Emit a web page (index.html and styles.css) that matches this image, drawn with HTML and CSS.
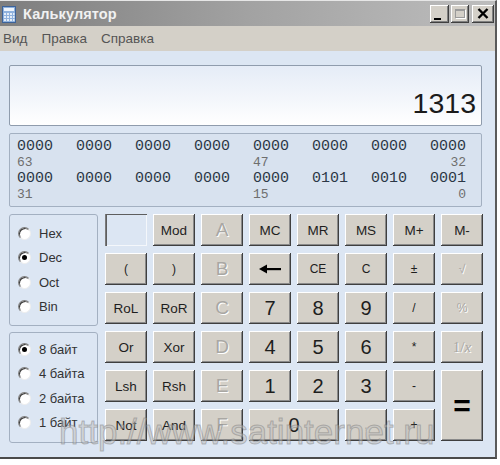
FILE: index.html
```html
<!DOCTYPE html>
<html lang="ru">
<head>
<meta charset="utf-8">
<title>Калькулятор</title>
<link rel="stylesheet" href="styles.css">
</head>
<body>
<div class="window">
  <div class="titlebar">
    <svg class="app-icon" width="14" height="17" viewBox="0 0 14 17">
      <rect x="0.5" y="0.5" width="13" height="16" fill="#8fb2de" stroke="#3d6399"/>
      <rect x="2" y="2" width="10" height="3" fill="#eef4fb"/>
      <g fill="#e4edf8">
        <rect x="2" y="7" width="2" height="2"/><rect x="5" y="7" width="2" height="2"/><rect x="8" y="7" width="2" height="2"/><rect x="11" y="7" width="1.5" height="2"/>
        <rect x="2" y="10" width="2" height="2"/><rect x="5" y="10" width="2" height="2"/><rect x="8" y="10" width="2" height="2"/><rect x="11" y="10" width="1.5" height="2"/>
        <rect x="2" y="13" width="2" height="2"/><rect x="5" y="13" width="2" height="2"/><rect x="8" y="13" width="2" height="2"/><rect x="11" y="13" width="1.5" height="2"/>
      </g>
    </svg>
    <span class="title">Калькулятор</span>
    <div class="caption-buttons">
      <span class="cap-btn cap-min"><span class="min-bar"></span></span>
      <span class="cap-btn cap-max"><span class="max-box"></span></span>
      <span class="cap-btn cap-close">
        <svg width="12" height="11" viewBox="0 0 12 11"><path d="M1.5 1 L10.5 10 M10.5 1 L1.5 10" stroke="#000" stroke-width="2.4"/></svg>
      </span>
    </div>
  </div>
  <div class="menubar">
    <span class="menu-item">Вид</span>
    <span class="menu-item">Правка</span>
    <span class="menu-item">Справка</span>
  </div>
  <div class="main">
    <div class="display"><span class="display-value">1313</span></div>
    <div class="bits">
      <span class="bit">0000</span><span class="bit">0000</span><span class="bit">0000</span><span class="bit">0000</span>
      <span class="bit">0000</span><span class="bit">0000</span><span class="bit">0000</span><span class="bit">0000</span>
      <span class="bit-label">63</span><span class="bit-label"></span><span class="bit-label"></span><span class="bit-label"></span>
      <span class="bit-label">47</span><span class="bit-label"></span><span class="bit-label"></span><span class="bit-label right">32</span>
      <span class="bit">0000</span><span class="bit">0000</span><span class="bit">0000</span><span class="bit">0000</span>
      <span class="bit">0000</span><span class="bit">0101</span><span class="bit">0010</span><span class="bit">0001</span>
      <span class="bit-label">31</span><span class="bit-label"></span><span class="bit-label"></span><span class="bit-label"></span>
      <span class="bit-label">15</span><span class="bit-label"></span><span class="bit-label"></span><span class="bit-label right">0</span>
    </div>
    <div class="lower">
      <div class="side">
        <div class="group group-base">
          <div class="radio-row"><span class="radio"></span><span>Hex</span></div>
          <div class="radio-row"><span class="radio checked"></span><span>Dec</span></div>
          <div class="radio-row"><span class="radio"></span><span>Oct</span></div>
          <div class="radio-row"><span class="radio"></span><span>Bin</span></div>
        </div>
        <div class="group group-size">
          <div class="radio-row"><span class="radio checked"></span><span>8 байт</span></div>
          <div class="radio-row"><span class="radio"></span><span>4 байта</span></div>
          <div class="radio-row"><span class="radio"></span><span>2 байта</span></div>
          <div class="radio-row"><span class="radio"></span><span>1 байт</span></div>
        </div>
      </div>
      <div class="keys">
        <span class="mem-box"></span>
        <span class="btn">Mod</span>
        <span class="btn hex off">A</span>
        <span class="btn">MC</span>
        <span class="btn">MR</span>
        <span class="btn">MS</span>
        <span class="btn">M+</span>
        <span class="btn">M-</span>

        <span class="btn small">(</span>
        <span class="btn small">)</span>
        <span class="btn hex off">B</span>
        <span class="btn"><svg width="22" height="10" viewBox="0 0 22 10"><path d="M0 5 L8 0.5 L8 9.5 Z" fill="#000"/><rect x="6" y="4" width="16" height="2.2" fill="#000"/></svg></span>
        <span class="btn small">CE</span>
        <span class="btn small">C</span>
        <span class="btn small">±</span>
        <span class="btn small off">√</span>

        <span class="btn">RoL</span>
        <span class="btn">RoR</span>
        <span class="btn hex off">C</span>
        <span class="btn digit">7</span>
        <span class="btn digit">8</span>
        <span class="btn digit">9</span>
        <span class="btn small">/</span>
        <span class="btn small off">%</span>

        <span class="btn">Or</span>
        <span class="btn">Xor</span>
        <span class="btn hex off">D</span>
        <span class="btn digit">4</span>
        <span class="btn digit">5</span>
        <span class="btn digit">6</span>
        <span class="btn small">*</span>
        <span class="btn recip off">1/<i>x</i></span>

        <span class="btn">Lsh</span>
        <span class="btn">Rsh</span>
        <span class="btn hex off">E</span>
        <span class="btn digit">1</span>
        <span class="btn digit">2</span>
        <span class="btn digit">3</span>
        <span class="btn small">-</span>
        <span class="btn equals">=</span>

        <span class="btn">Not</span>
        <span class="btn">And</span>
        <span class="btn hex off">F</span>
        <span class="btn digit zero">0</span>
        <span class="btn small off">,</span>
        <span class="btn small">+</span>
      </div>
    </div>
  </div>
  <div class="watermark">http://www.satinternet.ru</div>
</div>
</body>
</html>
```
FILE: styles.css
```css
* { box-sizing: border-box; }
html, body { margin: 0; padding: 0; }
body {
  background: #ffffff;
  font-family: "Liberation Sans", Arial, sans-serif;
  width: 500px;
  height: 465px;
  overflow: hidden;
}
.window {
  position: relative;
  width: 497px;
  border-top: 1px solid #e6e6e6;
  border-right: 2px solid #5a5a5a;
  border-bottom: 2px solid #4a4a4a;
}
.titlebar {
  height: 25px;
  display: flex;
  align-items: center;
  padding-left: 2px;
  background: linear-gradient(to right, #7e7e7e 0%, #a2a2a2 50%, #bdbdbd 100%);
}
.app-icon { margin-right: 7px; margin-top: 2px; }
.title {
  color: #f1f1f1;
  font-weight: bold;
  font-size: 14.5px;
  letter-spacing: 0.1px;
}
.caption-buttons {
  margin-left: auto;
  margin-right: 1px;
  display: flex;
  align-items: center;
}
.cap-btn {
  height: 18px;
  background: #d4d0c8;
  box-shadow: inset -1px -1px #404040, inset 1px 1px #ffffff, inset -2px -2px #808080;
  display: flex;
  align-items: center;
  justify-content: center;
}
.cap-min { width: 19px; align-items: flex-end; justify-content: flex-start; padding: 0 0 3px 4px; }
.min-bar { width: 7px; height: 2px; background: #000; }
.cap-max { width: 18px; margin-left: 2px; }
.max-box {
  width: 10px; height: 9px;
  border: 1px solid #9a9a9a;
  border-top-width: 2px;
  box-shadow: 1px 1px 0 #ffffff;
}
.cap-close { width: 22px; margin-left: 3px; }

.menubar {
  height: 25px;
  background: #d4d0c8;
  display: flex;
  align-items: center;
  gap: 14px;
  padding-left: 3px;
  font-size: 13.5px;
  color: #555555;
}

.main {
  height: 406px;
  background: #dce6f3;
  padding: 14px 0 0 9px;
}
.display {
  width: 473px;
  height: 61px;
  border: 1px solid #8f9cad;
  border-radius: 2px;
  background: linear-gradient(to bottom, #e5ecf7 0%, #f3f6fb 55%, #ffffff 100%);
  display: flex;
  justify-content: flex-end;
  align-items: flex-end;
  padding: 0 5px 6px 0;
}
.display-value {
  font-size: 28.5px;
  line-height: 32px;
  color: #1b1b1b;
}
.bits {
  margin-top: 7px;
  width: 473px;
  height: 74px;
  border: 1px solid #a3b0c1;
  border-radius: 2px;
  background: #d8e2ef;
  padding: 5px 0 0 7px;
  display: grid;
  grid-template-columns: repeat(8, 36px);
  column-gap: 23px;
  grid-auto-rows: 16px;
  font-family: "Liberation Mono", "DejaVu Sans Mono", monospace;
}
.bit {
  font-size: 15px;
  line-height: 16px;
  color: #2c3746;
}
.bit-label {
  font-size: 13px;
  line-height: 16px;
  color: #6e6e6e;
}
.bit-label.right { text-align: right; }

.lower {
  margin-top: 7px;
  display: flex;
  gap: 7px;
}
.side {
  width: 89px;
  display: flex;
  flex-direction: column;
  gap: 6px;
}
.group {
  height: 112px;
  border: 1px solid #a3b0c1;
  border-radius: 3px;
  padding-left: 8px;
  font-size: 13px;
  color: #333333;
}
.group-base { padding-top: 6px; }
.group-size { height: 111px; padding-top: 4px; }
.radio-row {
  height: 24.5px;
  display: flex;
  align-items: center;
  gap: 8px;
}
.radio {
  position: relative;
  width: 13px;
  height: 13px;
  border-radius: 50%;
  background: #ffffff;
  border: 1px solid;
  border-color: #7d7d7d #eeeeee #eeeeee #7d7d7d;
  box-shadow: inset 1px 1px 0 #3c3c3c;
}
.radio.checked::after {
  content: "";
  position: absolute;
  left: 3px;
  top: 3px;
  width: 5px;
  height: 5px;
  border-radius: 50%;
  background: #000000;
}

.keys {
  display: grid;
  grid-template-columns: repeat(8, 42px);
  grid-auto-rows: 32px;
  column-gap: 6px;
  row-gap: 7px;
}
.mem-box {
  background: #dce6f3;
  box-shadow: inset 1px 1px 0 #5e5e5e, inset -1px -1px 0 #f4f7fb;
  border-left: 1px solid #7b7b7b;
}
.btn {
  background: #d4d0c8;
  box-shadow: inset -1px -1px #3f3f3f, inset 1px 1px #ffffff, inset -2px -2px #8a8a8a;
  display: flex;
  align-items: center;
  justify-content: center;
  font-size: 13.5px;
  color: #1e1e1e;
}
.btn.small { font-size: 12px; }
.btn.digit { font-size: 20px; }
.btn.hex { font-size: 19px; }
.btn.off {
  color: #a9a7a3;
  text-shadow: 1px 1px 0 #ffffff;
}
.btn.recip {
  font-family: "Liberation Serif", "Times New Roman", serif;
  font-size: 15px;
}
.btn.equals {
  grid-row: span 2;
  font-size: 30px;
  font-weight: bold;
  color: #000;
}
.btn.zero { grid-column: span 2; }

.watermark {
  position: absolute;
  left: 59px;
  top: 413px;
  font-size: 35px;
  line-height: 35px;
  color: rgba(190, 190, 190, 0.5);
  -webkit-text-stroke: 1px rgba(110, 110, 110, 0.4);
  white-space: nowrap;
  pointer-events: none;
}
```
